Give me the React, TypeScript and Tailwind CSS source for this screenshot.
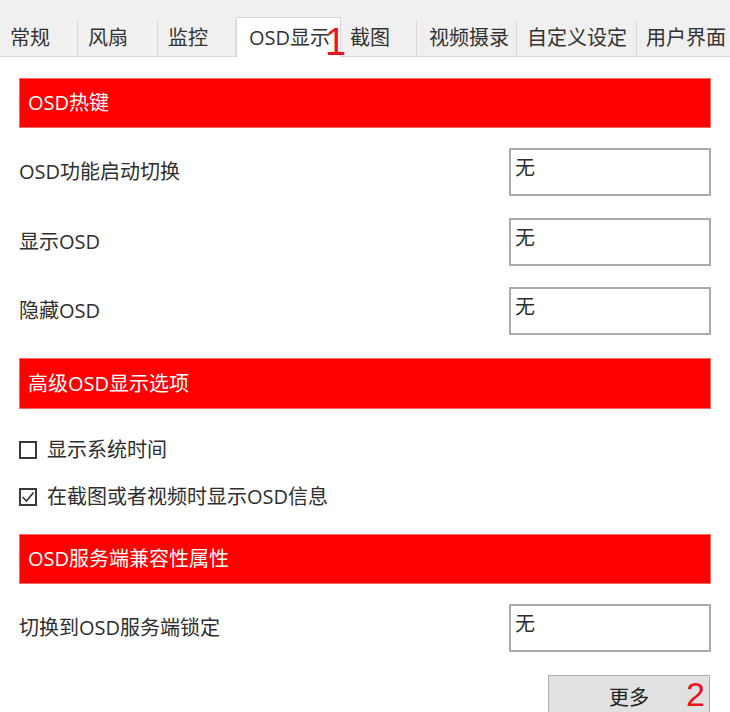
import React from 'react';

const tabs = [
  { label: '常规', cls: 'w-[78px] pl-[10px]' },
  { label: '风扇', cls: 'w-[80px] pl-[10px]' },
  { label: '监控', cls: 'w-[78px] pl-[10px]' },
  { label: 'OSD显示', cls: 'w-[105px] pl-[12px]', active: true },
  { label: '截图', cls: 'w-[76px] pl-[9px]' },
  { label: '视频摄录', cls: 'w-[100px] pl-[12px]' },
  { label: '自定义设定', cls: 'w-[120px] pl-[10px]' },
  { label: '用户界面', cls: 'w-[100px] pl-[9px]' },
];

function SectionHeader({ title, className = '' }: { title: string; className?: string }) {
  return (
    <div className={`h-[50px] flex items-center pl-[8px] bg-[#ff0000] border border-[#f26a6a] text-white text-[20px] ${className}`}>
      {title}
    </div>
  );
}

function KeyRow({ label, className = '' }: { label: string; className?: string }) {
  return (
    <div className={`flex items-center justify-between h-[48px] ${className}`}>
      <span className="text-[20px] text-[#2e2e2e]">{label}</span>
      <div className="w-[202px] h-[48px] border-2 border-[#ababab] bg-white pl-[4px] pt-[6px] text-[20px] leading-[24px] text-[#2e2e2e]">
        无
      </div>
    </div>
  );
}

function CheckRow({ label, checked, className = '' }: { label: string; checked?: boolean; className?: string }) {
  return (
    <div className={`flex items-center h-[30px] gap-[10px] ${className}`}>
      <div className="w-[18px] h-[18px] border-2 border-[#3a3a3a] bg-white flex items-center justify-center">
        {checked && (
          <svg width="14" height="14" viewBox="0 0 14 14">
            <polyline points="1.5,7 5.5,11 12.5,2.5" fill="none" stroke="#333" strokeWidth="1.6" />
          </svg>
        )}
      </div>
      <span className="text-[20px] text-[#2e2e2e]">{label}</span>
    </div>
  );
}

export default function App() {
  return (
    <div className="relative w-[730px] h-[712px] overflow-hidden bg-white font-['Open_Sans','Noto_Sans_CJK_SC',sans-serif]">
      {/* Tab strip */}
      <div className="bg-[#f0f0f0] pt-[20px]">
        <div className="flex h-[37px] border-b border-[#d9d9d9]">
          {tabs.map((t) =>
            t.active ? (
              <div
                key={t.label}
                className={`${t.cls} shrink-0 -mt-[3px] h-[41px] -mb-px bg-white border-x border-t border-[#d9d9d9] flex items-center text-[20px] text-[#333] relative z-10`}
              >
                {t.label}
              </div>
            ) : (
              <div
                key={t.label}
                className={`${t.cls} shrink-0 h-full border-r border-[#d9d9d9] flex items-center text-[20px] text-[#333]`}
              >
                {t.label}
              </div>
            )
          )}
        </div>
      </div>

      {/* Content */}
      <div className="flex flex-col px-[19px]">
        <SectionHeader title="OSD热键" className="mt-[21px]" />
        <KeyRow label="OSD功能启动切换" className="mt-[20px]" />
        <KeyRow label="显示OSD" className="mt-[22px]" />
        <KeyRow label="隐藏OSD" className="mt-[21px]" />

        <SectionHeader title="高级OSD显示选项" className="mt-[23px] h-[51px]" />
        <CheckRow label="显示系统时间" className="mt-[26px]" />
        <CheckRow label="在截图或者视频时显示OSD信息" checked className="mt-[17px]" />

        <SectionHeader title="OSD服务端兼容性属性" className="mt-[22px]" />
        <KeyRow label="切换到OSD服务端锁定" className="mt-[20px]" />

        <div className="self-end mr-[1px] mt-[23px] w-[162px] h-[46px] bg-[#e1e1e1] border border-[#adadad] flex items-center justify-center text-[20px] text-[#222]">
          更多
        </div>
      </div>

      {/* Annotations */}
      <span className="absolute left-[325px] top-[23px] text-[38px] leading-none text-[#e8141e] font-['Liberation_Sans',sans-serif] z-20">
        1
      </span>
      <span className="absolute left-[686px] top-[677px] text-[34px] leading-[34px] text-[#e8141e] font-['Liberation_Sans',sans-serif] z-20">
        2
      </span>
    </div>
  );
}
